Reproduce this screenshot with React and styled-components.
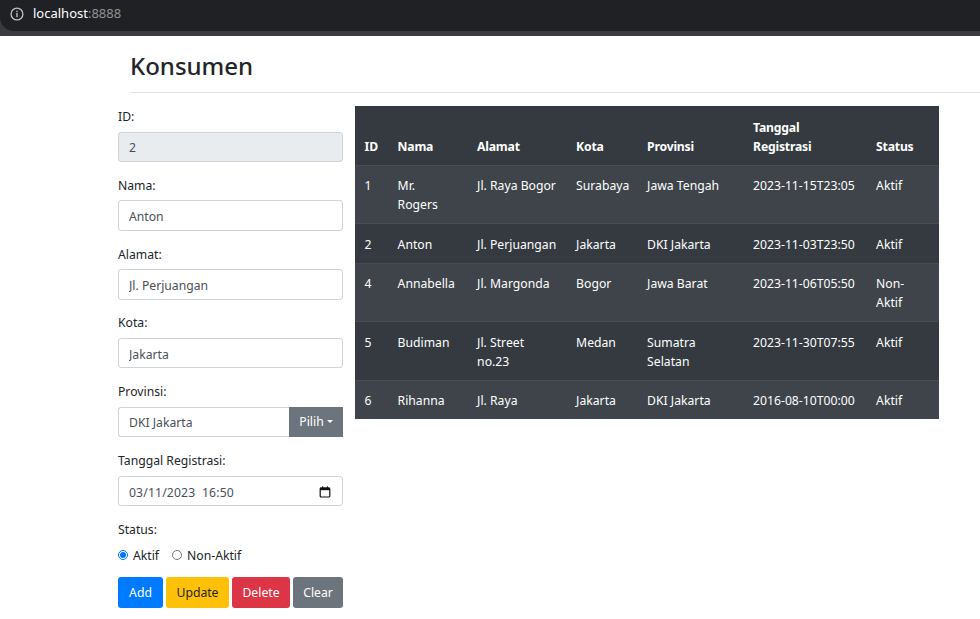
import React from 'react';
import styled, { createGlobalStyle } from 'styled-components';

const GlobalStyle = createGlobalStyle`
  html, body {
    margin: 0;
    padding: 0;
    background: #fff;
    overflow: hidden;
  }
  body {
    font-family: 'Noto Sans', 'Open Sans', sans-serif;
    font-size: 12.2px;
    line-height: 19.2px;
    color: #212529;
  }
`;

const ChromeBar = styled.div`
  height: 36px;
  background: #3a3b3f;
  box-sizing: border-box;
  padding-bottom: 5px;
`;

const AddressField = styled.div`
  height: 31px;
  box-sizing: border-box;
  padding: 0 0 3px 10px;
  background: #202124;
  border-bottom-left-radius: 14px;
  display: flex;
  align-items: center;
  gap: 9px;
  font-size: 13px;
  color: #fff;
`;

const Port = styled.span`
  color: #8f9194;
`;

const PageTitle = styled.h2`
  margin: 0 0 0 130px;
  height: 57px;
  box-sizing: border-box;
  border-bottom: 1px solid #dee2e6;
  padding-top: 15px;
  font-size: 24px;
  line-height: 30px;
  font-weight: 500;
`;

const Content = styled.div`
  display: flex;
  align-items: flex-start;
  gap: 12px;
  padding: 13px 0 0 118px;
`;

const Form = styled.form`
  width: 225px;
  flex: none;
  display: flex;
  flex-direction: column;
`;

const Group = styled.div`
  display: flex;
  flex-direction: column;
  margin-bottom: 12.8px;
`;

const Label = styled.label`
  display: block;
  height: 18.2px;
  padding-top: 1px;
  margin-bottom: 6.4px;
`;

const StatusLabel = styled(Label)`
  margin-bottom: 7.4px;
`;

const Input = styled.input`
  display: block;
  width: 100%;
  height: 30.4px;
  box-sizing: border-box;
  border: 1px solid #ced4da;
  border-radius: 3px;
  padding: 2px 10px 0;
  font: inherit;
  color: #495057;
  background: ${(p) => (p.readOnly ? '#e9ecef' : '#fff')};
  outline: none;
`;

const InputRow = styled.div`
  display: flex;
`;

const JoinedInput = styled(Input)`
  flex: 1;
  min-width: 0;
  border-right: none;
  border-radius: 3px 0 0 3px;
`;

const PickButton = styled.button`
  width: 54px;
  flex: none;
  display: flex;
  align-items: center;
  justify-content: center;
  gap: 3px;
  border: none;
  padding: 0;
  background: #6c757d;
  color: #fff;
  font: inherit;

  &::after {
    content: '';
    border-top: 3.5px solid #fff;
    border-left: 3.5px solid transparent;
    border-right: 3.5px solid transparent;
  }
`;

const DateField = styled.div`
  height: 30.4px;
  margin-top: 0.4px;
  box-sizing: border-box;
  border: 1px solid #ced4da;
  border-radius: 3px;
  padding: 3px 11px 0 10px;
  display: flex;
  align-items: center;
  justify-content: space-between;
  color: #495057;
`;

const DateText = styled.span`
  white-space: pre;
  letter-spacing: 0.15px;
`;

const Radios = styled.div`
  display: flex;
  align-items: center;
  height: 19.2px;
  margin-bottom: 12px;
`;

const RadioLabel = styled.label`
  display: flex;
  align-items: center;
  margin-right: 13px;
`;

const Radio = styled.input`
  width: 10px;
  height: 10px;
  margin: 0 5px 0 0;
  accent-color: #0075ff;
`;

const Buttons = styled.div`
  display: flex;
  gap: 3px;
`;

const ActionButton = styled.button`
  width: ${(p) => p.$width}px;
  height: 31px;
  border: none;
  border-radius: 3px;
  padding: 0;
  font: inherit;
  background: ${(p) => p.$bg};
  color: ${(p) => p.$fg || '#fff'};
`;

const Table = styled.table`
  width: 584px;
  flex: none;
  table-layout: fixed;
  border-collapse: collapse;
  color: #fff;
  background: #343a40;
`;

const HeadCell = styled.th`
  padding: 11.6px 9.6px 8.6px;
  vertical-align: bottom;
  text-align: left;
  font-weight: 700;
  letter-spacing: -0.2px;
`;

const Row = styled.tr`
  border-top: 1px solid #454d55;
  background: ${(p) => (p.$odd ? '#3e444a' : 'transparent')};
`;

const Cell = styled.td`
  padding: 10.6px 9.6px 8.6px;
  vertical-align: top;
`;

const columns = [
  { title: 'ID', width: 33 },
  { title: 'Nama', width: 79.5 },
  { title: 'Alamat', width: 99 },
  { title: 'Kota', width: 71 },
  { title: 'Provinsi', width: 106 },
  { title: 'Tanggal Registrasi', width: 123 },
  { title: 'Status', width: 72.5 },
];

const rows = [
  ['1', 'Mr. Rogers', 'Jl. Raya Bogor', 'Surabaya', 'Jawa Tengah', '2023-11-15T23:05', 'Aktif'],
  ['2', 'Anton', 'Jl. Perjuangan', 'Jakarta', 'DKI Jakarta', '2023-11-03T23:50', 'Aktif'],
  ['4', 'Annabella', 'Jl. Margonda', 'Bogor', 'Jawa Barat', '2023-11-06T05:50', 'Non-Aktif'],
  ['5', 'Budiman', 'Jl. Street no.23', 'Medan', 'Sumatra Selatan', '2023-11-30T07:55', 'Aktif'],
  ['6', 'Rihanna', 'Jl. Raya', 'Jakarta', 'DKI Jakarta', '2016-08-10T00:00', 'Aktif'],
];

const InfoIcon = () => (
  <svg width="14" height="14" viewBox="0 0 14 14" fill="none">
    <circle cx="7" cy="7" r="5.9" stroke="#bdc1c6" strokeWidth="1.3" />
    <rect x="6.3" y="6" width="1.4" height="4.2" fill="#bdc1c6" />
    <rect x="6.3" y="3.7" width="1.4" height="1.4" fill="#bdc1c6" />
  </svg>
);

const CalendarIcon = () => (
  <svg width="12" height="12" viewBox="0 0 12 12" fill="none">
    <rect x="1.2" y="2" width="9.6" height="9" rx="1" stroke="#111" strokeWidth="1.2" />
    <rect x="1" y="1.6" width="10" height="2.6" fill="#111" />
    <rect x="3" y="0.4" width="1.2" height="2" fill="#111" />
    <rect x="7.8" y="0.4" width="1.2" height="2" fill="#111" />
  </svg>
);

const App = () => (
  <>
    <GlobalStyle />
    <ChromeBar>
      <AddressField>
        <InfoIcon />
        <span>
          localhost<Port>:8888</Port>
        </span>
      </AddressField>
    </ChromeBar>
    <PageTitle>Konsumen</PageTitle>
    <Content>
      <Form>
        <Group>
          <Label>ID:</Label>
          <Input readOnly value="2" />
        </Group>
        <Group>
          <Label>Nama:</Label>
          <Input defaultValue="Anton" />
        </Group>
        <Group>
          <Label>Alamat:</Label>
          <Input defaultValue="Jl. Perjuangan" />
        </Group>
        <Group>
          <Label>Kota:</Label>
          <Input defaultValue="Jakarta" />
        </Group>
        <Group>
          <Label>Provinsi:</Label>
          <InputRow>
            <JoinedInput defaultValue="DKI Jakarta" />
            <PickButton type="button">Pilih</PickButton>
          </InputRow>
        </Group>
        <Group>
          <Label>Tanggal Registrasi:</Label>
          <DateField>
            <DateText>03/11/2023  16:50</DateText>
            <CalendarIcon />
          </DateField>
        </Group>
        <StatusLabel>Status:</StatusLabel>
        <Radios>
          <RadioLabel>
            <Radio type="radio" name="status" defaultChecked />
            Aktif
          </RadioLabel>
          <RadioLabel>
            <Radio type="radio" name="status" />
            Non-Aktif
          </RadioLabel>
        </Radios>
        <Buttons>
          <ActionButton type="button" $width={45} $bg="#007bff">Add</ActionButton>
          <ActionButton type="button" $width={63} $bg="#ffc107" $fg="#212529">Update</ActionButton>
          <ActionButton type="button" $width={58} $bg="#dc3545">Delete</ActionButton>
          <ActionButton type="button" $width={50} $bg="#6c757d">Clear</ActionButton>
        </Buttons>
      </Form>
      <Table>
        <colgroup>
          {columns.map((c) => (
            <col key={c.title} width={c.width} />
          ))}
        </colgroup>
        <thead>
          <tr>
            {columns.map((c) => (
              <HeadCell key={c.title}>{c.title}</HeadCell>
            ))}
          </tr>
        </thead>
        <tbody>
          {rows.map((row, i) => (
            <Row key={row[0]} $odd={i % 2 === 0}>
              {row.map((value, j) => (
                <Cell key={j}>{value}</Cell>
              ))}
            </Row>
          ))}
        </tbody>
      </Table>
    </Content>
  </>
);

export default App;
